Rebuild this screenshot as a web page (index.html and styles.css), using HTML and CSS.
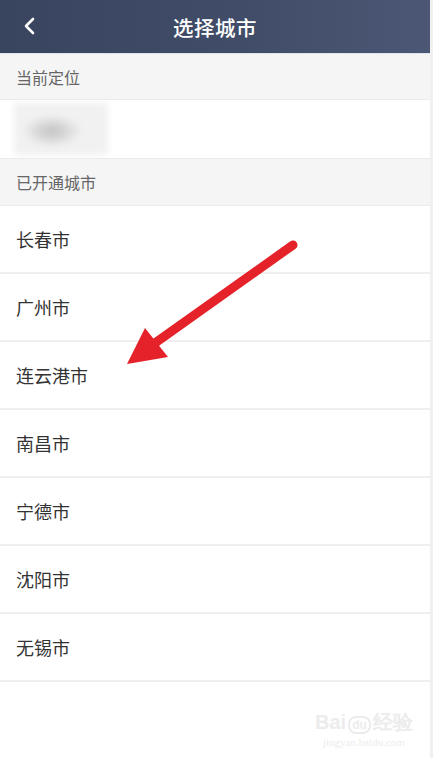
FILE: index.html
```html
<!DOCTYPE html>
<html lang="zh">
<head>
<meta charset="utf-8">
<title>选择城市</title>
<link rel="stylesheet" href="styles.css">
</head>
<body>
<div class="page">
  <header class="topbar">
    <span class="back">
      <svg width="14" height="20" viewBox="0 0 14 20"><path d="M11 3 L4 10 L11 17" fill="none" stroke="#fff" stroke-width="2.6" stroke-linecap="round" stroke-linejoin="round"/></svg>
    </span>
    <h1 class="title">选择城市</h1>
  </header>
  <div class="section">当前定位</div>
  <div class="loc-row"><div class="blur"></div></div>
  <div class="section section2">已开通城市</div>
  <ul class="list">
    <li class="item">长春市</li>
    <li class="item">广州市</li>
    <li class="item">连云港市</li>
    <li class="item">南昌市</li>
    <li class="item">宁德市</li>
    <li class="item">沈阳市</li>
    <li class="item">无锡市</li>
  </ul>
  <svg class="arrow" width="433" height="758" viewBox="0 0 433 758">
    <line x1="293" y1="245" x2="148" y2="348" stroke="#e52129" stroke-width="9" stroke-linecap="round"/>
    <polygon points="127,364 145,328 168,357" fill="#e52129"/>
  </svg>
  <div class="watermark">
    <div class="wm-top">Bai<span class="du">du</span>经验</div>
    <div class="wm-sub">jingyan.baidu.com</div>
  </div>
</div>
</body>
</html>
```
FILE: styles.css
```css
html, body {
  margin: 0;
  padding: 0;
  background: #ffffff;
}
.page {
  position: relative;
  width: 430px;
  height: 758px;
  border-right: 3px solid #f0f0f0;
  font-family: "Noto Sans CJK SC", "Noto Sans", sans-serif;
  overflow: hidden;
}
.topbar {
  height: 53px;
  background: linear-gradient(90deg, #39445f 0%, #414c68 55%, #4b5774 100%);
  display: flex;
  align-items: center;
  justify-content: center;
  position: relative;
  border-bottom: 1px solid #dfe3ea;
}
.back {
  position: absolute;
  left: 22px;
  top: 16px;
  display: flex;
}
.title {
  margin: 0;
  color: #ffffff;
  font-size: 20.5px;
  font-weight: 500;
  letter-spacing: 0.5px;
}
.section {
  height: 45px;
  background: #f5f5f5;
  color: #666666;
  font-size: 16px;
  display: flex;
  align-items: center;
  padding-left: 16px;
  border-bottom: 1px solid #ebebeb;
}
.section2 {
  height: 46px;
  border-top: 1px solid #ebebeb;
}
.loc-row {
  height: 58px;
  background: #ffffff;
  display: flex;
  align-items: center;
  padding-left: 14px;
}
.blur {
  width: 94px;
  height: 52px;
  background: radial-gradient(ellipse 30px 16px at 38px 28px, #c2c2c2 0%, #d8d8d8 50%, #f1f1f1 100%);
  filter: blur(3px);
}
.list {
  list-style: none;
  margin: 0;
  padding: 0;
}
.item {
  height: 66px;
  display: flex;
  align-items: center;
  padding-left: 16px;
  font-size: 18px;
  color: #333333;
  border-bottom: 2px solid #eeeeee;
}
.arrow {
  position: absolute;
  left: 0;
  top: 0;
}
.watermark {
  position: absolute;
  left: 315px;
  top: 712px;
  color: #ececec;
  font-family: "Liberation Sans", sans-serif;
  text-align: center;
}
.wm-top {
  font-size: 20px;
  font-weight: bold;
  line-height: 20px;
}
.du {
  font-size: 12px;
  border: 2px solid #ececec;
  border-radius: 8px;
  padding: 0 2px;
  margin: 0 2px;
}
.wm-sub {
  font-family: "Liberation Serif", serif;
  font-size: 11px;
  line-height: 14px;
}
```
